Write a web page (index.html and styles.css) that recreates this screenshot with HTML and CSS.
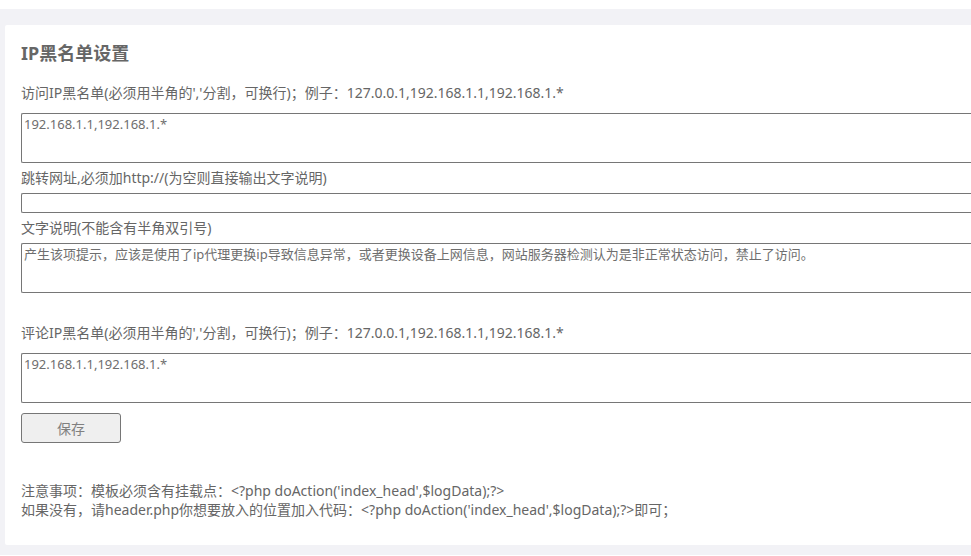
FILE: index.html
```html
<!DOCTYPE html>
<html lang="zh-CN">
<head>
<meta charset="utf-8">
<title>IP黑名单设置</title>
<link rel="stylesheet" href="styles.css">
</head>
<body>
<div class="page">
  <div class="card">
    <h2 class="title">IP黑名单设置</h2>
    <form class="form">
      <label class="label first">访问IP黑名单(必须用半角的','分割，可换行)；例子：127.0.0.1,192.168.1.1,192.168.1.*</label>
      <textarea class="area">192.168.1.1,192.168.1.*</textarea>
      <label class="label">跳转网址,必须加http://(为空则直接输出文字说明)</label>
      <input class="input" type="text" value="">
      <label class="label">文字说明(不能含有半角双引号)</label>
      <textarea class="area">产生该项提示，应该是使用了ip代理更换ip导致信息异常，或者更换设备上网信息，网站服务器检测认为是非正常状态访问，禁止了访问。</textarea>
      <label class="label spaced">评论IP黑名单(必须用半角的','分割，可换行)；例子：127.0.0.1,192.168.1.1,192.168.1.*</label>
      <textarea class="area">192.168.1.1,192.168.1.*</textarea>
      <button class="btn" type="button">保存</button>
    </form>
    <div class="notes">
      <p>注意事项：模板必须含有挂载点：&lt;?php doAction('index_head',$logData);?&gt;</p>
      <p>如果没有，请header.php你想要放入的位置加入代码：&lt;?php doAction('index_head',$logData);?&gt;即可；</p>
    </div>
  </div>
</div>
</body>
</html>
```

FILE: styles.css
```css
html, body {
  margin: 0;
  padding: 0;
  background: #ffffff;
  overflow: hidden;
}
body {
  font-family: "Noto Sans", "Noto Sans CJK SC", sans-serif;
  color: #666666;
}
.page {
  margin-top: 9px;
  background: #f2f2f6;
  padding: 16px 0 10px 5px;
}
.card {
  background: #ffffff;
  padding: 14px 0 26px 16px;
  border-radius: 2px 0 0 2px;
}
.title {
  margin: 0;
  font-size: 18px;
  line-height: 28px;
  font-weight: bold;
  color: #666666;
}
.form {
  display: flex;
  flex-direction: column;
  align-items: flex-start;
}
.label {
  display: block;
  font-size: 14px;
  line-height: 20px;
  margin-top: 5px;
  margin-bottom: 5px;
  color: #666666;
}
.label.first {
  margin-top: 16px;
  margin-bottom: 10px;
}
.label.spaced {
  margin-top: 30px;
  margin-bottom: 10px;
}
.area {
  box-sizing: border-box;
  width: 100%;
  height: 50px;
  margin: 0;
  padding: 2px 2px;
  border: 1px solid #767676;
  border-right: none;
  border-radius: 2px 0 0 2px;
  font-family: "Noto Sans", "Noto Sans CJK SC", sans-serif;
  font-size: 13px;
  line-height: 17px;
  color: #6e6e6e;
  resize: none;
  background: #fff;
  overflow: hidden;
}
.input {
  box-sizing: border-box;
  width: 100%;
  height: 20px;
  margin: 0;
  padding: 1px 2px;
  border: 1px solid #767676;
  border-right: none;
  border-radius: 2px 0 0 2px;
  font-size: 13px;
  background: #fff;
}
.btn {
  box-sizing: border-box;
  width: 100px;
  height: 30px;
  margin-top: 10px;
  border: 1px solid #767676;
  border-radius: 3px;
  background: #efefef;
  color: #808080;
  font-family: "Noto Sans CJK SC", sans-serif;
  font-size: 14px;
  padding: 0;
}
.notes {
  margin-top: 38px;
  font-size: 14px;
  line-height: 19px;
}
.notes p {
  margin: 0;
}
```
